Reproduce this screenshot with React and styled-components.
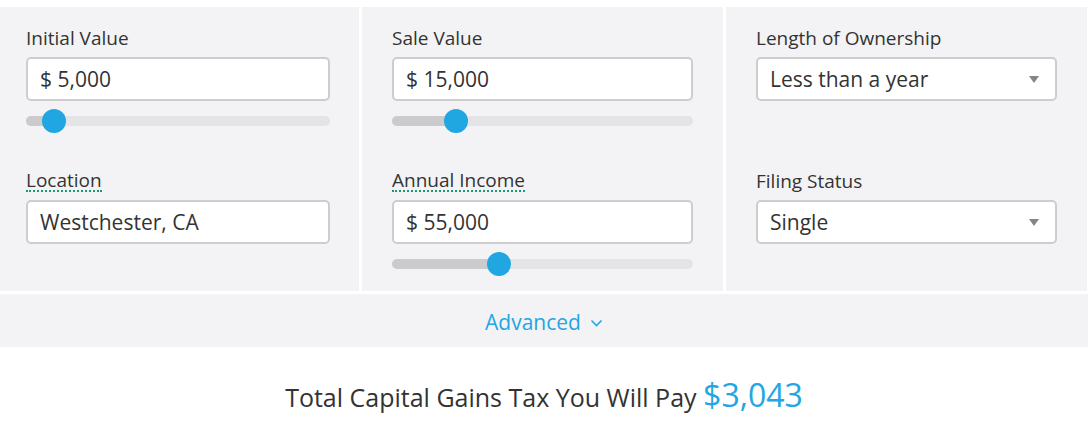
import React from 'react'
import styled, { createGlobalStyle } from 'styled-components';

const GlobalStyle = createGlobalStyle`
    html, body {
        margin: 0;
        padding: 0;
        background: #fff;
        font-family: "Open Sans", "Lato", sans-serif;
        color: #333;
    }
`

const fields = [
    [
        { label: 'Initial Value', value: '$ 5,000', slider: 0.057 },
        { label: 'Location', value: 'Westchester, CA', hint: true },
    ],
    [
        { label: 'Sale Value', value: '$ 15,000', slider: 0.187 },
        { label: 'Annual Income', value: '$ 55,000', hint: true, slider: 0.344 },
    ],
    [
        { label: 'Length of Ownership', value: 'Less than a year', select: true },
        { label: 'Filing Status', value: 'Single', select: true },
    ],
]

const Slider = ({ pos }) => (
    <SliderWrap>
        <Track>
            <Fill style={{ width: `calc(12px + (100% - 24px) * ${pos})` }} />
            <Thumb style={{ left: `calc((100% - 24px) * ${pos})` }} />
        </Track>
    </SliderWrap>
)

const App = () => {
    return (
        <Page>
            <GlobalStyle />
            <Grid>
                {fields.map((col, i) => (
                    <Column key={i} first={i === 0}>
                        {col.map((f) => (
                            <Field key={f.label}>
                                <Label hint={f.hint}>{f.label}</Label>
                                <Input>
                                    <span>{f.value}</span>
                                    {f.select && <Caret />}
                                </Input>
                                {f.slider !== undefined && <Slider pos={f.slider} />}
                            </Field>
                        ))}
                    </Column>
                ))}
            </Grid>
            <Advanced>
                Advanced
                <svg width="13" height="8" viewBox="0 0 13 8">
                    <path d="M1.5 1.5 L6.5 6.5 L11.5 1.5" fill="none" stroke="#23a6e2" strokeWidth="1.6" />
                </svg>
            </Advanced>
            <Result>
                Total Capital Gains Tax You Will Pay <Amount>$3,043</Amount>
            </Result>
        </Page>
    )
}

const Page = styled.div`
    width: 1088px;
    padding-top: 7px;
`

const Grid = styled.div`
    display: grid;
    grid-template-columns: 359px 361px 361px;
    column-gap: 3px;
    margin-bottom: 3px;
`

const Column = styled.div`
    background: #f3f3f5;
    padding: 20px ${p => p.first ? '29px 15px 26px' : '30px 15px 30px'};
`

const Field = styled.div`
    display: flex;
    flex-direction: column;
    align-items: flex-start;
    &:first-child {
        min-height: 143px;
    }
`

const Label = styled.div`
    font-size: 19px;
    line-height: 22px;
    color: #333;
    margin-bottom: 8px;
    ${p => p.hint && `
        border-bottom: 2px dotted #1a9a74;
        line-height: 20px;
    `}
`

const Input = styled.div`
    box-sizing: border-box;
    align-self: stretch;
    height: 44px;
    background: #fff;
    border: 2px solid #cdcdcf;
    border-radius: 5px;
    padding: 0 26px 0 12px;
    display: flex;
    align-items: center;
    justify-content: space-between;
    font-size: 21px;
    color: #333;
`

const Caret = styled.span`
    width: 0;
    height: 0;
    border-left: 5px solid transparent;
    border-right: 5px solid transparent;
    border-top: 7px solid #858585;
    margin-right: -10px;
`

const SliderWrap = styled.div`
    align-self: stretch;
    height: 24px;
    margin-top: 8px;
    display: flex;
    align-items: center;
`

const Track = styled.div`
    position: relative;
    flex: 1;
    height: 10px;
    border-radius: 5px;
    background: #e4e4e6;
`

const Fill = styled.div`
    height: 100%;
    border-radius: 5px;
    background: #cbcbcd;
`

const Thumb = styled.div`
    position: absolute;
    top: -7px;
    width: 24px;
    height: 24px;
    border-radius: 50%;
    background: #20a7e2;
`

const Advanced = styled.div`
    background: #f3f3f5;
    height: 53px;
    display: flex;
    align-items: center;
    justify-content: center;
    gap: 9px;
    font-size: 21px;
    padding-top: 2px;
    box-sizing: border-box;
    color: #23a6e2;
    svg {
        margin-top: 2px;
    }
`

const Result = styled.div`
    text-align: center;
    padding-top: 26px;
    font-size: 25px;
    color: #333;
`

const Amount = styled.span`
    font-size: 32px;
    color: #23a6e2;
`

export default App
